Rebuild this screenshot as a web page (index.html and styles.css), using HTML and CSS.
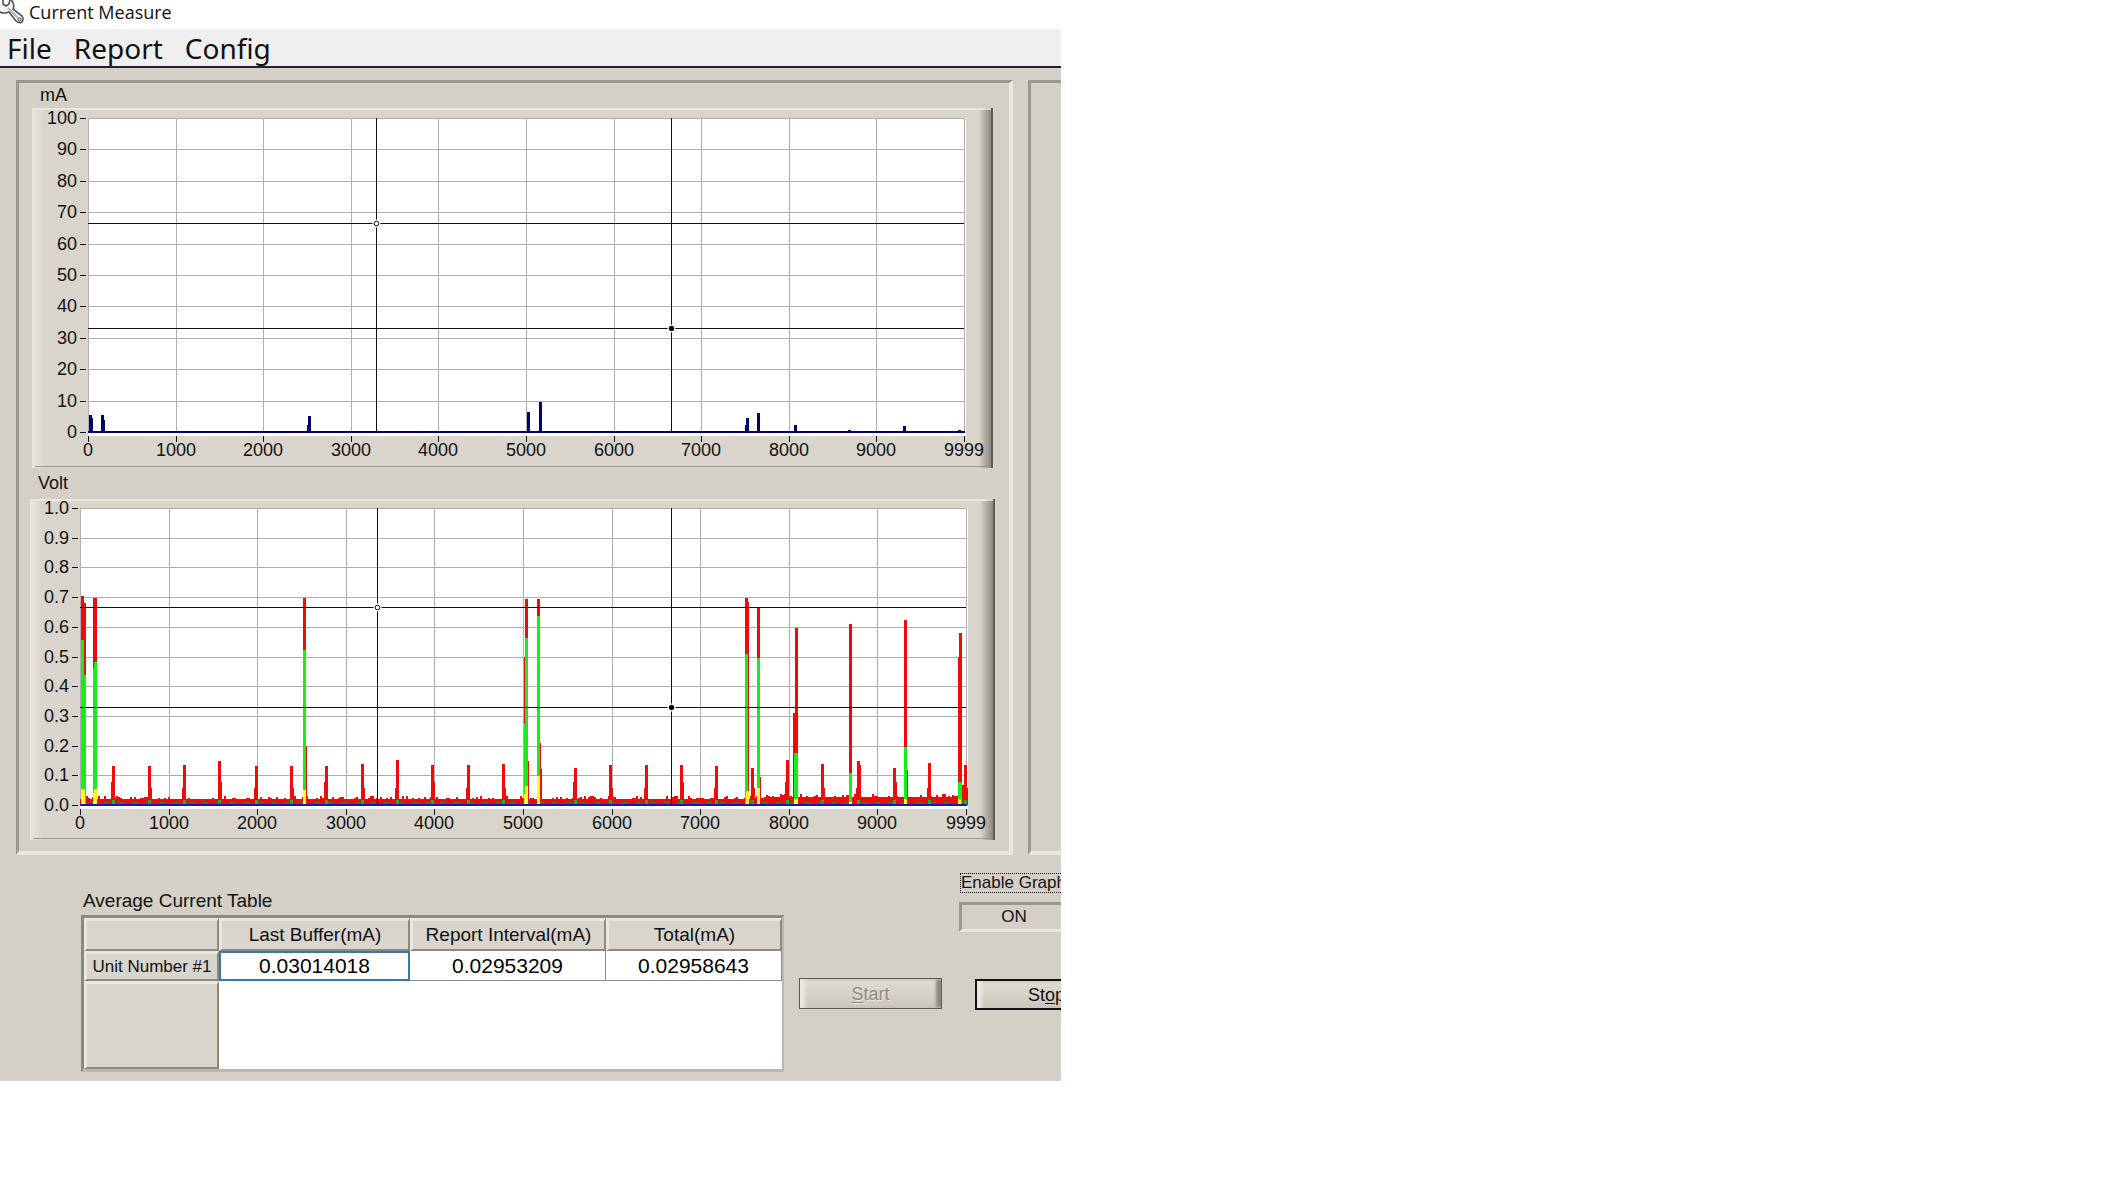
FILE: index.html
```html
<!DOCTYPE html>
<html lang="en">
<head>
<meta charset="utf-8">
<title>Current Measure</title>
<link rel="stylesheet" href="styles.css">
</head>
<body>
<div class="window">
  <header class="titlebar">
    <svg class="titlebar-icon" viewBox="0 0 24 24" aria-hidden="true">
      <path d="M-2 9 Q-1 13 4 13 Q7 13 9 12 L16 21 Q19 24 22 22 Q24 19 22 16 L13 9 Q15 5 12 1 L10 -1 L9 4 L6 6 L3 4 L3 -2" fill="#f1f1f1" stroke="#555" stroke-width="1.6"/>
      <path d="M8 8 L18 18" stroke="#b5b5b5" stroke-width="2"/>
      <circle cx="19.500" cy="19.500" r="1.500" fill="#fff" stroke="#333"/>
    </svg>
    <h1 class="titlebar-text">Current Measure</h1>
  </header>
  <nav class="menubar">
    <button type="button" class="menu">File</button>
    <button type="button" class="menu">Report</button>
    <button type="button" class="menu">Config</button>
  </nav>
  <main class="client">
    <div class="panels">
      <section class="panel">
        <figure class="graph graph-current">
          <figcaption class="graph-title">mA</figcaption>
          <svg class="graph-svg" id="current" viewBox="32 108 961 360" role="img" aria-label="Current in mA"></svg>
        </figure>
        <figure class="graph graph-volt">
          <figcaption class="graph-title graph-title-tall">Volt</figcaption>
          <svg class="graph-svg" id="volt" viewBox="30 499 965 341" role="img" aria-label="Voltage"></svg>
        </figure>
      </section>
      <section class="panel panel-side"></section>
    </div>
    <div class="controls">
      <table class="average">
        <caption>Average Current Table</caption>
        <colgroup><col class="col-unit"><col class="col-last"><col class="col-report"><col class="col-total"></colgroup>
        <thead>
          <tr><th></th><th scope="col">Last Buffer(mA)</th><th scope="col">Report Interval(mA)</th><th scope="col">Total(mA)</th></tr>
        </thead>
        <tbody>
          <tr class="row-unit"><th scope="row">Unit Number #1</th><td class="selected">0.03014018</td><td>0.02953209</td><td>0.02958643</td></tr>
          <tr class="row-rest"><th></th><td colspan="3"></td></tr>
        </tbody>
      </table>
      <button type="button" class="push push-start" disabled><u>S</u>tart</button>
      <div class="side">
        <label class="enable-label" for="enable">Enable Graph</label>
        <button type="button" class="toggle" id="enable">ON</button>
        <button type="button" class="push push-stop">St<u>o</u>p</button>
      </div>
    </div>
  </main>
</div>
<script src="charts.js"></script>
</body>
</html>
```

FILE: styles.css
```css
* { box-sizing: border-box; }

body {
  margin: 0;
  background: #fff;
  color: #111;
  font: 18px/20px "Liberation Sans", sans-serif;
}

button { font: inherit; color: inherit; }

.window { width: 49.93%; overflow: hidden; }

.titlebar { display: flex; align-items: center; gap: 4px; height: 29px; padding-bottom: 6px; }
.titlebar-icon { width: 24px; height: 24px; flex: none; }
.titlebar-text { margin: 0; padding-left: 1px; font: 18px/22px "Open Sans", sans-serif; }

.menubar {
  display: flex;
  gap: 22px;
  height: 39px;
  padding: 0 7px;
  background: #efefef;
  border-bottom: 2px solid #262724;
}
.menu { padding: 0; border: 0; background: none; font: 28px/34px "Noto Sans", sans-serif; }

.client { padding: 12px 0 9px; background: #d4d0c8; }

.panels { display: grid; grid-template-columns: minmax(0, 997fr) minmax(0, 33fr); gap: 15px; padding-left: 16px; }
.panel {
  padding-bottom: 11px;
  border: solid;
  border-width: 3px 4px 4px 3px;
  border-color: #9c978e #ebe7df #ebe7df #9c978e;
}
.panel-side { border-right: 0; }

.graph { margin: 0; }
.graph-current { padding: 0 16px 0 13px; }
.graph-volt { padding: 0 14px 0 11px; }
.graph-title { height: 25px; padding-left: 8px; line-height: 24px; }
.graph-title-tall { height: 31px; line-height: 30px; }
.graph-svg { display: block; width: 100%; overflow: visible; }
.graph-svg text { fill: #111; font-size: 18px; }

.controls {
  display: grid;
  grid-template-columns: 703px 143px minmax(0, 1fr);
  align-items: start;
  padding: 18px 0 0 81px;
}

.average {
  width: 703px;
  border: solid;
  border-width: 3px 2px 3px 3px;
  border-color: #8d8981 #bcb8b0 #bcb8b0 #8d8981;
  border-spacing: 0;
  table-layout: fixed;
  background: #fff;
}
.average caption { height: 42px; padding: 18px 0 0 2px; font-size: 19px; text-align: left; }
.col-unit { width: 135px; }
.col-last { width: 191px; }
.col-report { width: 196px; }
.average th, .average td { padding: 0; text-align: center; }
.average th {
  height: 33px;
  background: #d9d5cd;
  border: solid;
  border-width: 3px 2px 2px 3px;
  border-color: #ebe7df #8d8981 #8d8981 #ebe7df;
  font-size: 19px;
  font-weight: 400;
}
.average .row-unit th { height: 30px; font-size: 17px; }
.average .row-unit td {
  border: solid #8d8d8d;
  border-width: 0 1px 1px 0;
  color: #000;
  font-size: 21px;
}
.average .row-unit .selected { border: 2px solid #3b76a8; }
.average .row-rest th { height: 88px; }

.push {
  width: 143px;
  height: 31px;
  padding: 0;
  border: 1px solid #5c5a56;
  background: linear-gradient(#e0dcd4, #cbc7bf);
  box-shadow: inset 5px 0 3px #ebe7df, inset -5px 0 3px #8d8981;
  line-height: 26px;
}
.push u { text-underline-offset: 2px; }
.push-start { margin: 105px 0 0 15px; color: #8d8a84; text-shadow: 1px 1px #ebe7df; }
.push-stop { margin: 47px 0 0 16px; border: 2px solid #111; }

.side { display: flex; flex-direction: column; align-items: flex-start; padding-left: 32px; }
.enable-label { margin-left: 1px; border: 1px dotted #111; font-size: 17px; line-height: 18px; white-space: nowrap; }
.toggle {
  width: 110px;
  height: 30px;
  margin-top: 9px;
  padding: 0;
  border: 3px solid;
  border-color: #9c978e #ebe7df #ebe7df #9c978e;
  background: #d4d0c8;
  font-size: 17px;
}
```

FILE: charts.js
```js
const NS = 'http://www.w3.org/2000/svg';

function add(parent, tag, attrs, text) {
  const el = document.createElementNS(NS, tag);
  for (const key in attrs) el.setAttribute(key, attrs[key]);
  if (text !== undefined) el.textContent = text;
  parent.appendChild(el);
  return el;
}

function rect(svg, x, y, width, height, fill) {
  add(svg, 'rect', { x, y, width, height, fill, 'shape-rendering': 'crispEdges' });
}

function gradient(svg, id, from, to) {
  const g = add(svg, 'linearGradient', { id });
  add(g, 'stop', { offset: 0, 'stop-color': from });
  add(g, 'stop', { offset: 1, 'stop-color': to });
}

// Raised frame, plot area, grid lines and both axes.
function frame(svg, box, plot, yLabels) {
  const [l, t, r, b] = box;
  const [px, py, pr, pb] = plot;
  gradient(svg, svg.id + '-light', '#ebe7df', '#d9d5cd');
  gradient(svg, svg.id + '-dark', '#d9d5cd', '#8d8981');
  rect(svg, l, t, r - l, b - t, '#d9d5cd');
  rect(svg, l, t, 12, b - t, `url(#${svg.id}-light)`);
  rect(svg, r - 15, t + 2, 13, b - t - 2, `url(#${svg.id}-dark)`);
  rect(svg, l, t, r - l - 8, 2, '#ebe7df');
  rect(svg, l + 3, b - 2, r - l - 3, 1, '#9c978e');
  rect(svg, r - 2, t, 2, b - t, '#5f5a53');
  rect(svg, px, py, pr - px + 2, pb - py + 4, '#fff');
  for (let i = 0; i <= 10; i++) {
    const x = Math.round(px + (pr - px) * i / 10);
    const y = Math.round(py + (pb - py) * i / 10);
    rect(svg, x, py, 1, pb - py, '#b0b0b0');
    rect(svg, px, y, pr - px, 1, '#b0b0b0');
    rect(svg, px - 8, y, 6, 1, '#111');
    rect(svg, x, pb + 4, 1, 6, '#111');
    add(svg, 'text', { x: px - 11, y: y + 6, 'text-anchor': 'end' }, yLabels(10 - i));
    add(svg, 'text', { x, y: pb + 24, 'text-anchor': 'middle' }, i === 10 ? '9999' : String(i * 1000));
  }
}

function cursor(svg, plot, x, y, solid) {
  rect(svg, x, plot[1], 1, plot[3] - plot[1], '#111');
  rect(svg, plot[0], y, plot[2] - plot[0], 1, '#111');
  add(svg, 'circle', { cx: x + .5, cy: y + .5, r: 4, fill: '#fff' });
  add(svg, 'circle', { cx: x + .5, cy: y + .5, r: 2.3, fill: solid ? '#000' : '#fff', stroke: '#000' });
}

// Each bar is [x, top, width = 3, bottom = base].
function bars(svg, list, base, color) {
  for (const [x, top, w = 3, bottom = base] of list) rect(svg, x, top, w, bottom - top, color);
}

const current = document.getElementById('current');
const cPlot = [88, 118, 964, 432];
frame(current, [32, 108, 993, 468], cPlot, n => String(n * 10));
bars(current, [
  [89, 415], [91, 418, 2], [101, 415], [103, 420, 2], [308, 416], [307, 425, 2],
  [527, 412], [529, 424, 1], [539, 402], [541, 424, 1], [746, 418], [745, 425, 2],
  [757, 413], [794, 425], [848, 430], [903, 426], [958, 430], [88, 431, 877]
], 433, '#000070');
cursor(current, cPlot, 376, 223, false);
cursor(current, cPlot, 671, 328, true);

const volt = document.getElementById('volt');
const vPlot = [80, 508, 966, 805];
frame(volt, [30, 499, 995, 840], vPlot, n => (n / 10).toFixed(1));

let noise = `M80 805`;
let seed = 7;
for (let x = 80; x < 967; x += 2) {
  seed = (seed * 1103515245 + 12345) % 2147483648;
  const rise = x > 762 ? 2 : 0;
  const y = 799 - rise - Math.floor(Math.pow(seed / 2147483648, 3) * 4);
  noise += `V${y}H${x + 2}`;
}
add(volt, 'path', { d: noise + 'V805Z', fill: '#f00a0a', 'shape-rendering': 'crispEdges' });

const minor = [
  [112, 766], [148, 766], [183, 765], [218, 761], [255, 766], [290, 766], [325, 766],
  [361, 764], [396, 760], [431, 765], [467, 765], [502, 764], [574, 768], [609, 765],
  [645, 765], [680, 765], [715, 766], [751, 768], [786, 760], [821, 764], [857, 761],
  [893, 768], [928, 763], [964, 765]
];
bars(volt, minor, 804, '#f00a0a');
bars(volt, minor.map(([x], i) => [x + (i % 2 ? 3 : -1), i % 3 ? 788 : 782, 1]), 804, '#f00a0a');
bars(volt, [
  [81, 596], [83, 603], [93, 598, 4], [303, 598], [306, 746, 1], [524, 657, 1, 724],
  [525, 599], [528, 761, 1], [537, 599], [540, 743, 1], [541, 769, 1], [745, 598],
  [747, 602, 2], [757, 608], [760, 777, 1], [795, 628], [793, 713, 2], [849, 624],
  [859, 765, 2], [904, 620], [907, 770, 1], [959, 633], [958, 657, 2], [962, 785, 2]
], 804, '#f00a0a');
bars(volt, minor.map(([x]) => [x, 800]), 804, '#18b818');
for (let x = 90; x < 966; x += 14) rect(volt, x, 802, 6, 1, '#4b7a12');
bars(volt, [
  [81, 640], [84, 675, 2], [93, 668, 4], [94, 662], [303, 650], [524, 725, 2],
  [525, 638], [537, 616], [745, 654], [747, 671, 1], [757, 658], [794, 753, 4],
  [849, 773], [904, 747], [958, 782, 4]
], 804, '#14f014');
bars(volt, [
  [81, 789, 4], [94, 789, 3], [93, 793, 4], [303, 790], [525, 786], [524, 794, 3],
  [537, 776], [746, 791, 3], [757, 788], [794, 799, 4], [849, 802], [904, 799], [958, 799]
], 804, '#ffff14');
rect(volt, 80, 804, 887, 2, '#1414c8');
cursor(volt, vPlot, 377, 607, false);
cursor(volt, vPlot, 671, 707, true);
```
